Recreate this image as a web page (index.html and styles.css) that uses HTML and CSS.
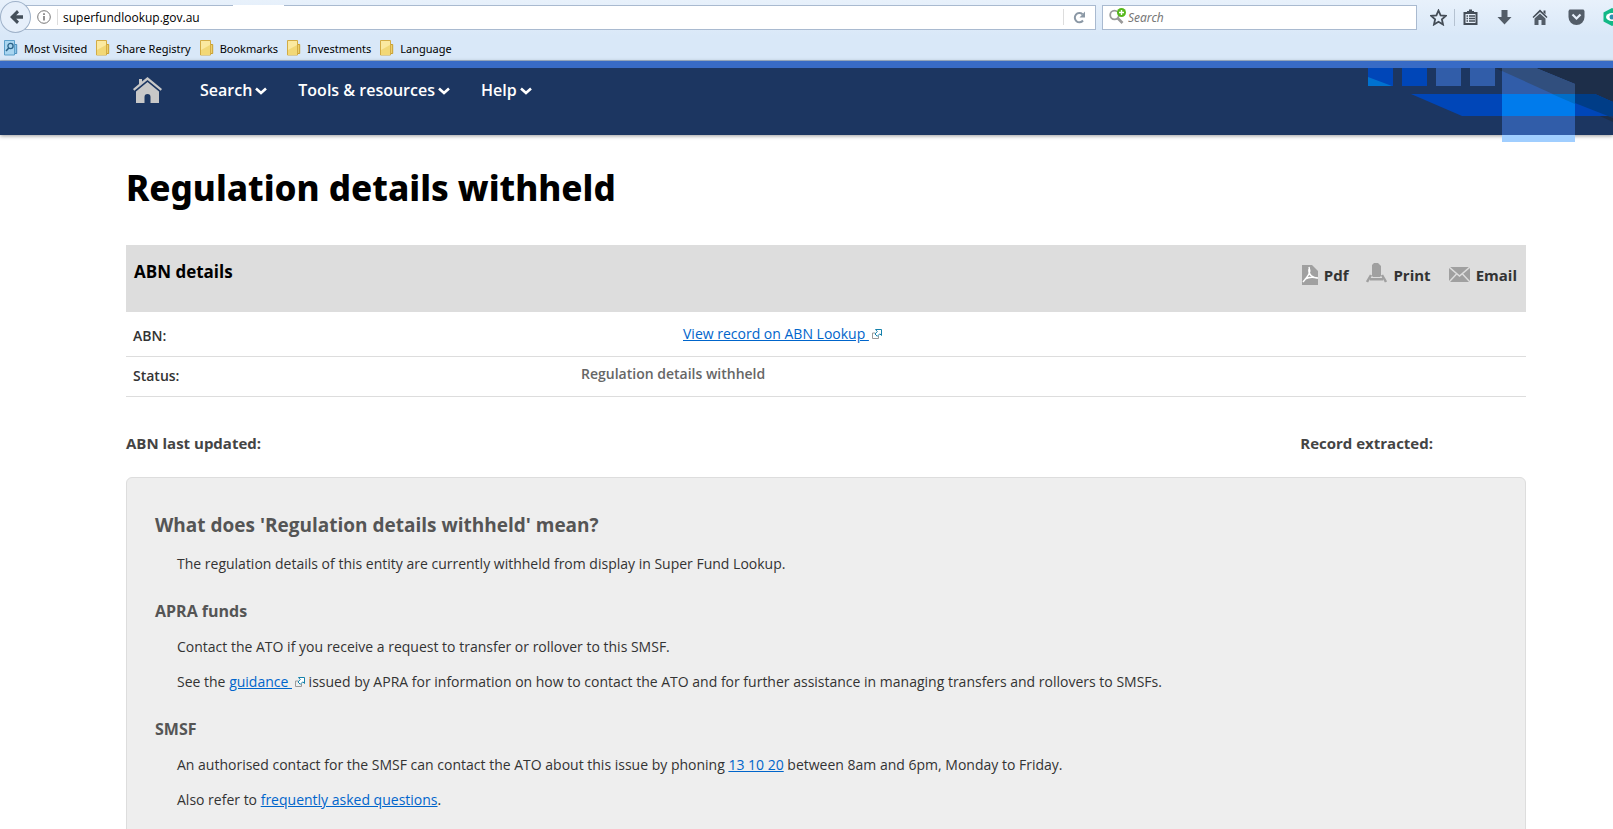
FILE: index.html
```html
<!DOCTYPE html>
<html lang="en">
<head>
<meta charset="UTF-8">
<title>Super Fund Lookup</title>
<link rel="stylesheet" href="styles.css">
</head>
<body>

<!-- symbols used more than once -->
<svg class="sprite" aria-hidden="true">
    <symbol id="folder" viewBox="0 0 14 16">
        <path d="M10.5 4.500h2.200v9h-2.200z" fill="#efd06a" stroke="#c99f2e"/>
        <path d="M.5 .5h10v14.500h-10z" fill="#fbe9a0" stroke="#d3ac45"/>
        <path d="M1 15V10L10 5v10z" fill="#f2d877"/>
    </symbol>
    <symbol id="chevron" viewBox="0 0 14 10">
        <path d="M2 2.500l5 4.500 5-4.500" fill="none" stroke="#fff" stroke-width="2.600"/>
    </symbol>
    <symbol id="external" viewBox="0 0 10 10">
        <path d="M3 4H.5v5.500h6V7" fill="none" stroke="#999"/>
        <path d="M3.500 .5h6v6L7.800 4.800 5.300 7.300 3 5 5.300 2.500z" fill="#fff" stroke="#1581ab"/>
    </symbol>
</svg>

<div class="browser">
    <div class="toolbar">
        <button class="back" aria-label="Back">
            <svg width="14" height="16" viewBox="0 0 14 16"><path d="M8 1L1 8l7 7 2-2.500L7.200 9.800H14V6.200H7.200L10 3.500z" fill="#444f5a"/></svg>
        </button>
        <div class="address">
            <svg width="14" height="14" viewBox="0 0 14 14"><circle cx="7" cy="7" r="6.300" fill="none" stroke="#777"/><path d="M6.200 6h1.600v4.500H6.200zM6.200 3.300h1.600v1.600H6.200z" fill="#777"/></svg>
            <input class="url" type="text" value="superfundlookup.gov.au" aria-label="Address">
            <button class="reload" aria-label="Reload">
                <svg width="13" height="13" viewBox="0 0 13 13"><path d="M10 9.500A4.600 4.600 0 1 1 9.500 3.200" fill="none" stroke="#8b98a5" stroke-width="2"/><path d="M12 .5v6H6.500z" fill="#8b98a5"/></svg>
            </button>
        </div>
        <div class="searchbox">
            <svg width="17" height="19" viewBox="0 0 17 19"><circle cx="5.500" cy="7" r="4.300" fill="none" stroke="#999" stroke-width="1.800"/><path d="M8.500 10l5 5" stroke="#999" stroke-width="2.600"/><circle cx="12.500" cy="4.500" r="4.500" fill="#57b81c"/><path d="M12.500 2v5M10 4.500h5" stroke="#fff" stroke-width="1.400"/></svg>
            <input type="text" placeholder="Search" aria-label="Search">
        </div>
        <div class="tools">
            <button aria-label="Bookmark this page"><svg width="17" height="17" viewBox="0 0 17 17"><path d="M8.500 1.500l2.100 4.800 5.200.5-3.900 3.500 1.100 5.200-4.500-2.700L4 15.500l1.100-5.200L1.200 6.800l5.200-.5z" fill="none" stroke="#444d57" stroke-width="1.800"/></svg></button>
            <button class="divided" aria-label="Bookmarks list"><svg width="15" height="16" viewBox="0 0 15 16"><path d="M1.500 4h12v11h-12z" fill="#e6effa" stroke="#444d57" stroke-width="2"/><path d="M4 4V2h2V.500h3V2h2v2z" fill="#444d57"/><path d="M3.500 7h1.500M6 7h6M3.500 9.500h1.500M6 9.500h6M3.500 12h1.500M6 12h6" stroke="#444d57" stroke-width="1.300"/></svg></button>
            <button aria-label="Downloads"><svg width="15" height="16" viewBox="0 0 15 16"><path d="M4.500 1h6v7h4L7.500 15.500.5 8h4z" fill="#535d68"/></svg></button>
            <button aria-label="Home"><svg width="16" height="16" viewBox="0 0 16 16"><path d="M8 .5L15.500 8l-1 1L8 3 1.500 9l-1-1z" fill="#444d57"/><path d="M8 4.500l5.500 5V16h-4v-5h-3v5h-4V9.500z" fill="#535d68"/><path d="M11.500 1.500h2v4l-2-2z" fill="#444d57"/></svg></button>
            <button aria-label="Pocket"><svg width="17" height="16" viewBox="0 0 17 16"><path d="M1.500 .5h14L16.500 2v6a8 8 0 0 1-16 0V2z" fill="#535d68"/><path d="M4.500 5.500l4 4 4-4" fill="none" stroke="#e6effa" stroke-width="2.200"/></svg></button>
            <button aria-label="Extension"><svg width="18" height="18" viewBox="0 0 18 18"><path d="M9 0l8.500 4.500v9L9 18 .5 13.500v-9z" fill="#12b886"/><ellipse cx="9" cy="9" rx="6" ry="4" fill="#fff"/><circle cx="9" cy="9" r="2.500" fill="#2b8fb0"/></svg></button>
        </div>
    </div>
    <div class="bookmarks">
        <a href="#"><svg width="14" height="16" viewBox="0 0 14 16"><path d="M10.500 4.500h2.200v9h-2.200z" fill="#8cc3e6" stroke="#4a8fbd"/><path d="M.5 .5h10v14.500h-10z" fill="#a9d5f0" stroke="#5b9fca"/><circle cx="6.500" cy="6" r="2.600" fill="none" stroke="#2a6288" stroke-width="1.300"/><path d="M4.800 8L2 11" stroke="#2a6288" stroke-width="1.600"/></svg>Most Visited</a>
        <a href="#"><svg width="14" height="16"><use href="#folder"/></svg>Share Registry</a>
        <a href="#"><svg width="14" height="16"><use href="#folder"/></svg>Bookmarks</a>
        <a href="#"><svg width="14" height="16"><use href="#folder"/></svg>Investments</a>
        <a href="#"><svg width="14" height="16"><use href="#folder"/></svg>Language</a>
    </div>
</div>

<header class="site-header">
    <nav class="menu">
        <a class="home" href="#" aria-label="Home"><svg width="29" height="26" viewBox="0 0 29 26"><path d="M14.500 0L29 12l-1.300 1.700L14.500 3 1.300 13.700 0 12l6-5V2h3v2.500z" fill="#c8c8c8"/><path d="M14.500 5L26 14.500V26h-8.500v-6a3 3 0 0 0-6 0v6H3V14.500z" fill="#c8c8c8"/></svg></a>
        <a href="#">Search<svg width="14" height="10"><use href="#chevron"/></svg></a>
        <a href="#">Tools &amp; resources<svg width="14" height="10"><use href="#chevron"/></svg></a>
        <a href="#">Help<svg width="14" height="10"><use href="#chevron"/></svg></a>
    </nav>
    <svg class="artwork" width="245" height="74" viewBox="0 0 245 74" aria-hidden="true">
        <path d="M127 0h118v54z" fill="#1d2e49"/>
        <path d="M0 0h25v18H0zM34 0h25v18H34z" fill="#0046b8"/>
        <path d="M0 9l24 9H0z" fill="#0072d0"/>
        <path d="M68 0h25v18H68zM102 0h25v18h-25z" fill="#315da9"/>
        <path d="M43 26h184l18 8v14l-3 0H94z" fill="#0046b8"/>
        <path d="M184 26h43l18 8v16z" fill="#003d87"/>
        <path d="M241 48h4v2z" fill="#1c3661"/>
        <path d="M134 0h34l39 16v51h-73z" fill="#315da9"/>
        <path d="M134 0h34l39 16v20l-73-33z" fill="#314f7e"/>
        <path d="M134 26h73v22h-73z" fill="#007bec"/>
        <path d="M184 26h23v10z" fill="#016ec8"/>
        <path d="M134 67h73v7h-73z" fill="#a0ceff"/>
    </svg>
</header>

<main class="content">
    <h1>Regulation details withheld</h1>

    <div class="panel-head">
        <h2>ABN details</h2>
        <div class="actions">
            <a href="#"><svg width="16" height="20" viewBox="0 0 16 20"><path d="M0 0h10l6 6v14H0z" fill="#a0a0a0"/><path d="M7 2c2 5 0 8-6 15M7 4c-1 6 4 9 9 9M3 14c4-2 8-2 12-1" fill="none" stroke="#fff" stroke-width="1.500"/></svg>Pdf</a>
            <a href="#"><svg width="21" height="25" viewBox="0 0 21 25"><path d="M6 2l2-2h4l3 3v10l-1 1H7l-1-1z" fill="#a0a0a0"/><path d="M5 12L1 19M16 12l4 7" stroke="#a0a0a0" stroke-width="2.500"/><path d="M4 15h13v2.500H4z" fill="#a0a0a0"/></svg>Print</a>
            <a href="#"><svg width="21" height="16" viewBox="0 0 21 16"><path d="M0 0h21v15H0z" fill="#a0a0a0"/><path d="M0 0l10.500 9L21 0M0 15l7.500-8M21 15l-7.500-8" fill="none" stroke="#ddd" stroke-width="1.500"/></svg>Email</a>
        </div>
    </div>

    <table class="details">
        <tr class="first">
            <th scope="row">ABN:</th>
            <td class="record"><a href="#">View record on ABN Lookup </a><svg class="ext" width="10" height="10"><use href="#external"/></svg></td>
        </tr>
        <tr>
            <th scope="row">Status:</th>
            <td class="status">Regulation details withheld</td>
        </tr>
    </table>

    <div class="dates">
        <span>ABN last updated:</span>
        <span class="extracted">Record extracted:</span>
    </div>

    <section class="info">
        <h2>What does 'Regulation details withheld' mean?</h2>
        <p>The regulation details of this entity are currently withheld from display in Super Fund Lookup.</p>
        <h3>APRA funds</h3>
        <p>Contact the ATO if you receive a request to transfer or rollover to this SMSF.</p>
        <p>See the <a href="#">guidance </a><svg class="ext" width="10" height="10"><use href="#external"/></svg> issued by APRA for information on how to contact the ATO and for further assistance in managing transfers and rollovers to SMSFs.</p>
        <h3>SMSF</h3>
        <p>An authorised contact for the SMSF can contact the ATO about this issue by phoning <a href="#">13 10 20</a> between 8am and 6pm, Monday to Friday.</p>
        <p>Also refer to <a href="#">frequently asked questions</a>.</p>
    </section>
</main>

</body>
</html>
```
FILE: styles.css
```css
/* --- Base ----------------------------------------------------------- */
*{ box-sizing:border-box; }
html{ overflow:hidden; }
body{
    margin:0;
    font-family:"Open Sans","Noto Sans",sans-serif;
    font-size:14px;
    color:#333;
    background:#fff;
}
a{ color:#0065cb; }
.sprite{
    position:absolute;
    width:0;
    height:0;
}
button{
    border:none;
    background:none;
    padding:0;
    display:flex;
    align-items:center;
    justify-content:center;
}

/* --- Browser bars --------------------------------------------------- */
.browser{
    background:linear-gradient(#e8f1fb,#d9e8f8 36px);
    border-bottom:1px solid #a3b7cf;
    color:#000;
    font-family:"Noto Sans","Open Sans",sans-serif;
    font-size:11px;
}
.toolbar{
    display:flex;
    align-items:center;
    height:34px;
    overflow:hidden;
}
.back{
    width:31px;
    height:32px;
    flex:none;
    border:1px solid #9fb2c9;
    border-radius:50%;
    background:#e6effa;
    z-index:1;
}
.address,
.searchbox{
    display:flex;
    align-items:center;
    height:25px;
    background:#fff;
    border:1px solid #a9bad0;
}
.address{
    position:relative;
    flex:1;
    margin-left:-6px;
    padding-left:11px;
}
/* blank stretch in the top border */
.address::before{
    content:"";
    position:absolute;
    top:-1px;
    left:207px;
    width:51px;
    height:1px;
    background:#fff;
}
.toolbar input{
    flex:1;
    min-width:0;
    border:none;
    padding:0;
    background:none;
    font:inherit;
    font-size:12px;
    outline:none;
}
.toolbar .url{
    font-family:"Open Sans","Noto Sans",sans-serif;
    height:16px;
    margin-left:6px;
    padding-left:5px;
    border-left:1px solid #ddd;
}
.reload{
    width:32px;
    height:16px;
    border-left:1px solid #ddd;
}
.searchbox{
    width:315px;
    margin-left:6px;
    padding-left:6px;
}
.searchbox input{ margin-left:2px; }
.searchbox input::placeholder{
    color:#777;
    font-style:italic;
}
.tools{
    display:flex;
    width:196px;
    padding-left:5px;
}
.tools button{
    width:36px;
    height:17px;
    flex:none;
}
.tools button:first-child{ width:32px; }
.tools .divided{ 
    width:32px;
    border-left:1px solid #b5c2d1;
}
.bookmarks{
    display:flex;
    gap:9px;
    height:26px;
    padding:6px 4px 0;
}
.bookmarks a{
    display:flex;
    gap:6px;
    height:16px;
    line-height:18px;
    color:#000;
    text-decoration:none;
}

/* --- Site header ---------------------------------------------------- */
.site-header{
    position:relative;
    height:74px;
    border-top:7px solid #386bc6;
    background:#1c3661;
    box-shadow:0 1px 4px rgba(0,0,0,.4);
}
.menu{
    display:flex;
    gap:30px;
    padding:9px 0 0 133px;
}
.menu a{
    color:#fff;
    font-size:16px;
    font-weight:600;
    line-height:26px;
    text-decoration:none;
}
.menu .home{ margin-right:8px; }
.menu svg{ margin-left:2px; }
.menu .home svg{ margin-left:0; }
.artwork{
    position:absolute;
    top:0;
    right:0;
}

/* --- Record --------------------------------------------------------- */
.content{ padding:0 87px 0 126px; }
h1{
    margin:28px 0 32px;
    font-family:"Noto Sans","Open Sans",sans-serif;
    font-size:35px;
    line-height:50px;
    font-weight:800;
    color:#000;
}
.panel-head{
    display:flex;
    justify-content:space-between;
    height:67px;
    padding:14px 9px 0 8px;
    background:#ddd;
}
.panel-head h2{
    margin:0;
    font-size:17px;
    line-height:26px;
    color:#000;
}
.actions{
    display:flex;
    gap:18px;
    height:32px;
    align-items:center;
}
.actions a{
    display:flex;
    align-items:center;
    gap:6px;
    color:#333;
    font-size:15px;
    font-weight:700;
    text-decoration:none;
}
.details{
    width:100%;
    border-collapse:collapse;
}
.details th,
.details td{
    height:40px;
    padding:0;
    border-bottom:1px solid #ddd;
    text-align:left;
    vertical-align:top;
    line-height:20px;
    font-weight:600;
}
.details th{
    width:455px;
    padding:9px 0 0 7px;
}
.details td{ padding-top:7px; }
.details .first th{
    height:44px;
    padding-top:14px;
}
.details .record{
    padding:12px 0 0 102px;
    font-weight:400;
}
.details .status{ color:#666; }
.ext{ margin-left:3px; }
.dates{
    display:flex;
    justify-content:space-between;
    margin:34px 0 22px;
    font-size:15px;
    font-weight:700;
    line-height:24px;
    color:#444;
}
.extracted{ margin-right:93px; }

/* --- Explanation box ------------------------------------------------ */
.info{
    padding:33px 28px 40px;
    border:1px solid #ddd;
    border-radius:6px;
    background:#eee;
}
.info h2,
.info h3{
    margin:0;
    font-weight:700;
    color:#555;
}
.info h2{
    font-size:19px;
    line-height:29px;
}
.info h3{
    margin-top:24px;
    font-size:16px;
    line-height:24px;
}
.info p{
    margin:13px 0 0 22px;
    line-height:22px;
}
```
